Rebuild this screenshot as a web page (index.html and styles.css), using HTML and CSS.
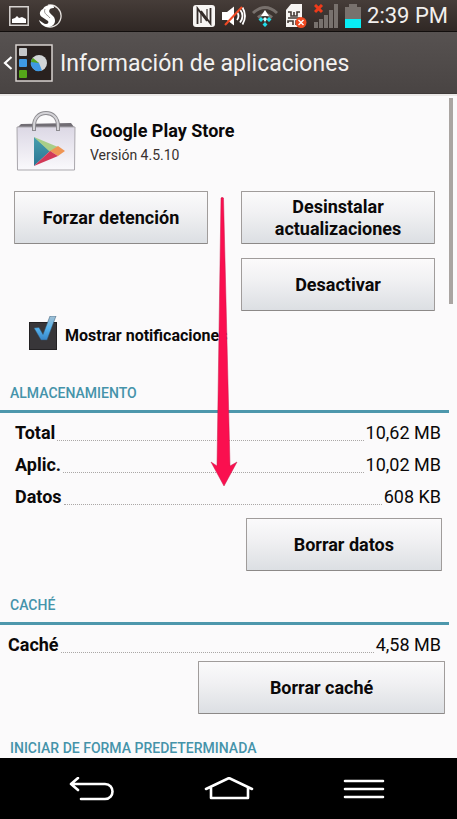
FILE: index.html
```html
<!DOCTYPE html>
<html lang="es">
<head>
<meta charset="utf-8">
<meta name="viewport" content="width=device-width, initial-scale=1">
<title>Información de aplicaciones</title>
<link rel="stylesheet" href="styles.css">
</head>
<body>
<div class="status">
  <svg width="20" height="20" viewBox="0 0 20 20"><path fill="none" stroke="#d8d4d1" stroke-width="1.5" d="M.8.8h18.4v18.4H.8z"/><path fill="#fff" d="M3 17v-4l3-1 2-2 2 2 3-1 2 1 2 1v4z"/></svg>
  <svg class="swirl" width="24" height="24" viewBox="0 0 24 24"><path fill="none" stroke="#e6e2df" stroke-width="1.300" d="M10 1.200a11 11 0 1 1-4 20"/><path fill="#fff" d="M14 1C8 1 6 3 5 5 1 7 1 11 4 13l6 4c1 1 0 3-2 3-2 0-4-2-7-4 1 4 5 7 9 7 7 0 9-7 5-11-3-3-5-4-3-7 1-1 3-1 4-1 0-2-1-3-2-3z"/><path fill="none" stroke="#3a322e" stroke-width=".5" d="M7 5c-2 5 3 6 5 9"/></svg>
  <span class="spacer"></span>
  <svg width="22" height="22" viewBox="0 0 22 22"><rect width="22" height="22" rx="3" fill="#f7f5f3"/><path fill="none" stroke="#342c29" stroke-width="1.800" d="M4.500 19V3.500L14 16M17.500 3v15.500L8 6"/><path fill="none" stroke="#342c29" stroke-width="1.200" d="M8 6v12M14 16V4"/></svg>
  <svg class="mute" width="26" height="22" viewBox="0 0 26 22"><path fill="#fff" d="M1 7h5l7-5.500v19L6 15H1z"/><path fill="none" stroke="#fff" stroke-width="1.800" d="M16 7q3 4 0 8M19 4.500q5 6.500 0 13M21.500 2.500q5 8.500 0 17"/><path stroke="#f04a24" stroke-width="2" d="M4 20 21 2"/></svg>
  <svg class="wifi" width="28" height="24" viewBox="0 0 28 24"><path fill="none" stroke="#77706c" stroke-width="3" d="M2 9q12-11 24 0M7 13.500q7-6 14 0"/><path fill="#fff" d="m14 6 4 6h-8z"/><path fill="#20dce8" d="m10 13 2.500 2.500L10 18l-2.500-2.500zM18 13l2.500 2.500L18 18l-2.500-2.500zM14 18l2.500 2.500L14 23l-2.500-2.500z"/><path fill="#d9ffff" d="m14 13 2 2-2 3-2-3z"/></svg>
  <svg class="sim" width="22" height="24" viewBox="0 0 22 24"><path fill="#f7f5f3" d="M6 0h11v23H1V6z"/><path fill="none" stroke="#443b37" stroke-width="1.600" d="M3 8h3v4h6V8h3M3 14h12M3 19v-2h5v4M9 8v4M11 21v-4h4"/><circle cx="16" cy="18.500" r="5.500" fill="#ee4a22"/><path stroke="#fff" stroke-width="1.400" d="m13.500 16 5 5m0-5-5 5"/></svg>
  <svg class="signal" width="24" height="24" viewBox="0 0 24 24"><path fill="#78716d" d="M0 18h4v6H0zM5 15h4v9H5zM10 11h4v13h-4zM15 6h4v18h-4zM20 0h4v24h-4z"/><path stroke="#ee3b1b" stroke-width="3" d="m1 1 7 7m0-7L1 8"/></svg>
  <svg width="16" height="24" viewBox="0 0 16 24"><path fill="#78716d" d="M4 0h8v3h4v12H0V3h4z"/><path fill="#08eef5" d="M0 15h16v9H0z"/></svg>
  <time class="clock">2:39 PM</time>
</div>
<header class="bar">
  <a class="up" href="#" aria-label="Atrás">
    <svg width="10" height="14" viewBox="0 0 10 14"><path fill="none" stroke="#fff" stroke-width="2.200" d="M8.500 1 2 7l6.500 6"/></svg>
    <svg width="38" height="38" viewBox="0 0 38 38"><path fill="#29211f" stroke="#d7d2d0" stroke-width="1.500" d="M1 1h36v36H1z"/><rect x="4" y="4" width="8" height="8" rx="1" fill="#c5c7c9"/><rect x="4" y="15" width="8" height="8" rx="1" fill="#3f99e3"/><rect x="4" y="26" width="8" height="8" rx="1" fill="#55a619"/><circle cx="24" cy="19" r="8" fill="#d2d5d7"/><path fill="#3f99e3" d="m24 19 3 7.500A8 8 0 0 1 17 15z"/><path fill="#55a619" d="m24 19-8-1a8 8 0 0 1 2-4z"/></svg>
  </a>
  <h1>Información de aplicaciones</h1>
</header>
<main>
  <section class="app">
    <svg width="60" height="62" viewBox="0 0 60 62"><defs><linearGradient id="bag" x2="0" y2="1"><stop stop-color="#dcd8e5"/><stop offset="1" stop-color="#faf9fc"/></linearGradient><linearGradient id="blue" x2="0" y2="1"><stop stop-color="#489fae"/><stop offset="1" stop-color="#2a7594"/></linearGradient></defs><path fill="#716d74" d="m5 13 50-1 3 4H2z"/><path fill="url(#bag)" stroke="#aaa7ad" d="M1 16h58l-.500 43H1.500z"/><path fill="none" stroke="#8d8b90" stroke-width="4" d="M18 20v-5c0-8 5-13 12-13s12 5 12 13v5"/><path fill="none" stroke="#d5d4d8" stroke-width="2" d="M18 19v-4c0-8 5-13 12-13s12 5 12 13v4"/><path fill="url(#blue)" d="M18 26v29l16-15z"/><path fill="#a9ce88" d="m18 26 24 10-8 5z"/><path fill="#ef9554" d="m42 35 7 5-7 5-8-5z"/><path fill="#d23857" d="m34 40 8 5-24 10z"/></svg>
    <div><h2>Google Play Store</h2><p>Versión 4.5.10</p></div>
  </section>
  <div class="actions">
    <button type="button">Forzar detención</button>
    <button type="button">Desinstalar actualizaciones</button>
    <button type="button" class="second">Desactivar</button>
  </div>
  <label class="notify">
    <span class="tick"><input type="checkbox" checked><svg width="28" height="34" viewBox="0 0 28 34"><defs><linearGradient id="check" x2="0" y2="1"><stop stop-color="#a3bfd2"/><stop offset=".5" stop-color="#57b4ee"/><stop offset="1" stop-color="#3786c9"/></linearGradient></defs><path fill="url(#check)" stroke="#33526c" stroke-width=".5" d="m5 12 5-.500 4 7L21 0h6l-9 24h-6z"/></svg></span>
    Mostrar notificaciones
  </label>
  <section>
    <h3>ALMACENAMIENTO</h3>
    <dl>
      <div><dt>Total</dt><dd>10,62 MB</dd></div>
      <div><dt>Aplic.</dt><dd>10,02 MB</dd></div>
      <div><dt>Datos</dt><dd>608 KB</dd></div>
    </dl>
    <div class="clear"><button type="button">Borrar datos</button></div>
  </section>
  <section class="cache">
    <h3>CACHÉ</h3>
    <dl><div><dt>Caché</dt><dd>4,58 MB</dd></div></dl>
    <div class="clear"><button type="button">Borrar caché</button></div>
  </section>
  <section><h3>INICIAR DE FORMA PREDETERMINADA</h3></section>
  <span class="thumb"></span>
  <svg class="arrow" width="28" height="290" viewBox="0 0 28 290"><path fill="#fa0f4f" stroke="#c81c4c" stroke-width=".5" d="M11 1q1-1.500 2.500 0L20 269l7-4-13 24-13-24 6 4z"/></svg>
</main>
<nav>
  <button type="button" aria-label="Volver"><svg width="46" height="24" viewBox="0 0 46 24"><path d="M9 1 2 7l7 6M2 7h34c10 0 10 15 0 15H12"/></svg></button>
  <button type="button" aria-label="Inicio"><svg width="50" height="24" viewBox="0 0 50 24"><path d="M2 12 25 1l23 11M7 11v10h37V11"/></svg></button>
  <button type="button" aria-label="Menú"><svg width="42" height="24" viewBox="0 0 42 24"><path d="M2 4h38M2 12h38M2 20h38"/></svg></button>
</nav>
</body>
</html>
```
FILE: styles.css
```css
* { box-sizing: border-box; margin: 0; }
body {
  display: flex;
  flex-direction: column;
  height: 100vh;
  overflow: hidden;
  background: #fbfafb;
  color: #0b0909;
  font: 18px/22px Roboto, "Liberation Sans", sans-serif;
}
svg { display: block; flex: none; }
button { font: inherit; cursor: pointer; }

.status {
  display: flex;
  flex: none;
  align-items: center;
  height: 32px;
  padding: 0 9px;
  background: linear-gradient(#463d39, #302825);
  border-bottom: 1px solid #120e0d;
  color: #f2efed;
}
.swirl { margin-left: 9px; }
.spacer { flex: 1; }
.mute { margin-left: 6px; }
.wifi { margin-left: 4px; }
.sim { margin-left: 6px; }
.signal { margin-left: 7px; }
.signal + svg { margin-left: 7px; }
.clock { margin-left: 6px; font-size: 22px; }

.bar {
  display: flex;
  flex: none;
  align-items: center;
  gap: 7px;
  height: 62px;
  padding-left: 3px;
  background: linear-gradient(#575251, #494443);
  border-bottom: 1px solid #3f3a39;
  color: #f3f1f0;
}
.up { display: flex; align-items: center; gap: 2px; }
h1 { margin-top: 2px; font-size: 23px; font-weight: 400; line-height: 32px; }

main {
  position: relative;
  flex: 1;
  min-height: 0;
  overflow: hidden;
  border-top: 2px solid #eae8e7;
}
.app {
  display: flex;
  gap: 14px;
  padding: 15px 16px 0;
}
h2 { margin-top: 8px; font-size: 18px; font-weight: 700; line-height: 24px; }
.app p { color: #39312f; font-size: 14px; line-height: 24px; }

.actions {
  display: grid;
  grid-template-columns: 1fr 1fr;
  gap: 14px 33px;
  padding: 18px 22px 0 14px;
}
.second { grid-column: 2; }
.actions button, .clear button {
  height: 53px;
  padding: 0 24px;
  border: 1px solid #a09c9b;
  border-bottom-color: #8c8988;
  border-radius: 1px;
  background: linear-gradient(#fbfafb, #f1f1f3 40%, #dcdfe3);
  color: #0b0909;
  font-weight: 700;
}

.notify {
  display: flex;
  align-items: center;
  gap: 8px;
  margin-top: 11px;
  padding-left: 29px;
  font-size: 16px;
  font-weight: 700;
  line-height: 28px;
}
.tick { position: relative; display: block; height: 28px; }
.tick input { display: block; appearance: none; width: 28px; height: 28px; background: #383639; border: 1px solid #232123; }
.tick svg { position: absolute; left: 0; bottom: 0; pointer-events: none; }

h3 {
  margin-right: 8px;
  padding: 0 10px 6px;
  border-bottom: 3px solid #4d97ac;
  color: #4593aa;
  font-size: 14px;
  font-weight: 500;
  line-height: 22px;
}
section h3 { margin-top: 32px; }
.cache h3 { margin-top: 23px; }
.cache + section h3 { margin-top: 23px; }
dl { padding: 4px 16px 0 15px; }
dl div { display: flex; align-items: center; height: 32px; }
dl div::before {
  content: "";
  order: 1;
  flex: 1;
  height: 14px;
  margin: 0 2px;
  border-bottom: 1px dotted #aaa7a6;
}
dt { font-weight: 700; }
dd { order: 2; }
.clear { display: flex; justify-content: flex-end; padding: 5px 15px 0; }
.clear button { width: 46%; }
.cache dl { padding-left: 8px; }
.cache .clear { padding: 0 12px; }
.cache .clear button { width: 57%; }

.thumb { position: absolute; top: 2px; right: 4px; width: 4px; height: 206px; background: #aaa5a2; }
.arrow { position: absolute; top: 101px; left: 46%; pointer-events: none; }

nav {
  display: flex;
  flex: none;
  justify-content: center;
  gap: 89px;
  height: 61px;
  padding-right: 3px;
  background: #000;
}
nav button { padding: 0; border: 0; background: none; }
nav path { fill: none; stroke: #fff; stroke-width: 2.600; stroke-linecap: round; stroke-linejoin: round; }
```
